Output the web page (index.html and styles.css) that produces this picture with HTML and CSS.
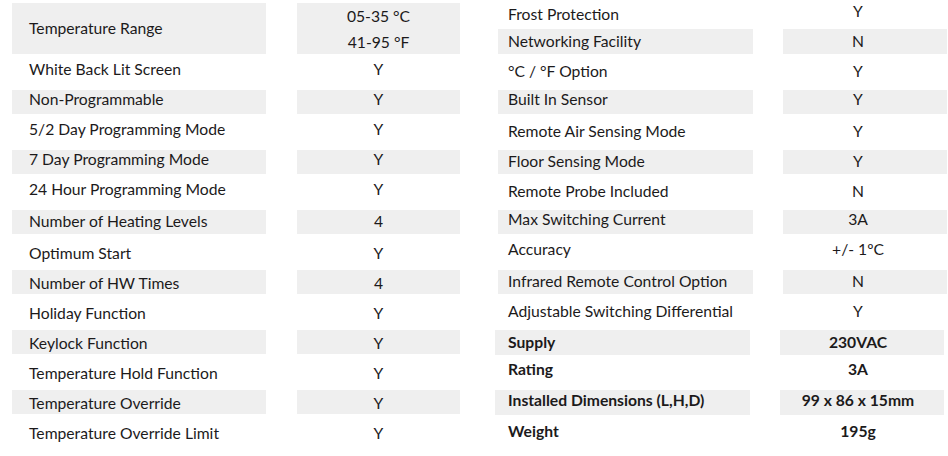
FILE: index.html
```html
<!DOCTYPE html>
<html>
<head>
<meta charset="utf-8">
<link rel="stylesheet" href="styles.css">
</head>
<body>
<div class="sheet">
  <div class="col col-left">
    <div class="row tall shade"><div class="lab">Temperature Range</div><div class="val two"><span>05-35 °C</span><span>41-95 °F</span></div></div>
    <div class="row up"><div class="lab">White Back Lit Screen</div><div class="val">Y</div></div>
    <div class="row shade up"><div class="lab">Non-Programmable</div><div class="val">Y</div></div>
    <div class="row up"><div class="lab">5/2 Day Programming Mode</div><div class="val">Y</div></div>
    <div class="row shade up"><div class="lab">7 Day Programming Mode</div><div class="val">Y</div></div>
    <div class="row up"><div class="lab">24 Hour Programming Mode</div><div class="val">Y</div></div>
    <div class="row shade"><div class="lab">Number of Heating Levels</div><div class="val">4</div></div>
    <div class="row down"><div class="lab">Optimum Start</div><div class="val">Y</div></div>
    <div class="row shade down"><div class="lab">Number of HW Times</div><div class="val">4</div></div>
    <div class="row down"><div class="lab">Holiday Function</div><div class="val">Y</div></div>
    <div class="row shade down"><div class="lab">Keylock Function</div><div class="val">Y</div></div>
    <div class="row down"><div class="lab">Temperature Hold Function</div><div class="val">Y</div></div>
    <div class="row shade down"><div class="lab">Temperature Override</div><div class="val">Y</div></div>
    <div class="row down"><div class="lab">Temperature Override Limit</div><div class="val">Y</div></div>
  </div>
  <div class="col col-right">
    <div class="row first"><div class="lab">Frost Protection</div><div class="val">Y</div></div>
    <div class="row shade wide"><div class="lab">Networking Facility</div><div class="val">N</div></div>
    <div class="row"><div class="lab">°C / °F Option</div><div class="val">Y</div></div>
    <div class="row shade up"><div class="lab">Built In Sensor</div><div class="val">Y</div></div>
    <div class="row"><div class="lab">Remote Air Sensing Mode</div><div class="val">Y</div></div>
    <div class="row shade"><div class="lab">Floor Sensing Mode</div><div class="val">Y</div></div>
    <div class="row"><div class="lab">Remote Probe Included</div><div class="val">N</div></div>
    <div class="row shade up"><div class="lab">Max Switching Current</div><div class="val">3A</div></div>
    <div class="row up"><div class="lab">Accuracy</div><div class="val">+/- 1ºC</div></div>
    <div class="row shade"><div class="lab">Infrared Remote Control Option</div><div class="val">N</div></div>
    <div class="row"><div class="lab">Adjustable Switching Differential</div><div class="val">Y</div></div>
    <div class="row shade wide bold"><div class="lab">Supply</div><div class="val">230VAC</div></div>
    <div class="row bold up"><div class="lab">Rating</div><div class="val">3A</div></div>
    <div class="row shade wide bold up"><div class="lab">Installed Dimensions (L,H,D)</div><div class="val">99 x 86 x 15mm</div></div>
    <div class="row bold"><div class="lab">Weight</div><div class="val">195g</div></div>
  </div>
</div>
</body>
</html>
```
FILE: styles.css
```css
html, body {
  margin: 0;
  padding: 0;
  background: #ffffff;
}
body {
  width: 948px;
  height: 456px;
  overflow: hidden;
  font-family: Lato, "Open Sans", sans-serif;
  font-size: 15.7px;
  color: #1c1a1b;
}
.sheet {
  display: flex;
}
.col {
  display: flex;
  flex-direction: column;
  gap: 6px;
}
.col-left {
  padding: 3px 0 0 12px;
  width: 449px;
}
.col-right {
  padding: 0 0 0 37px;
}
.row {
  display: flex;
  height: 24px;
  align-items: stretch;
}
.lab, .val {
  display: flex;
  align-items: center;
  line-height: 1;
  box-sizing: border-box;
}
.col-left .row { gap: 31px; }
.col-right .row { gap: 30px; }
.col-left .lab { width: 254px; padding-left: 17px; }
.col-left .val { width: 163px; justify-content: center; }
.col-right .lab { width: 255px; padding-left: 10px; }
.col-right .val { width: 164px; justify-content: center; padding-right: 14px; }
.shade .lab, .shade .val { background: #efefef; }
.row.up .lab, .row.up .val { padding-bottom: 4px; }
.row.down .lab, .row.down .val { padding-top: 4px; }
.row.tall { height: 51px; }
.row.tall .val { padding-top: 2px; }
.val.two {
  flex-direction: column;
  justify-content: center;
  gap: 10px;
}
.row.first { height: 23px; }
.row.first .lab { padding-top: 6px; }
.row.wide { height: 25px; }
.row.bold {
  font-weight: 700;
  margin-left: -3px;
}
.row.bold.wide { margin-bottom: -1px; }
.row.bold .lab { padding-left: 13px; }
.row.bold .val { padding-right: 8px; }
```
